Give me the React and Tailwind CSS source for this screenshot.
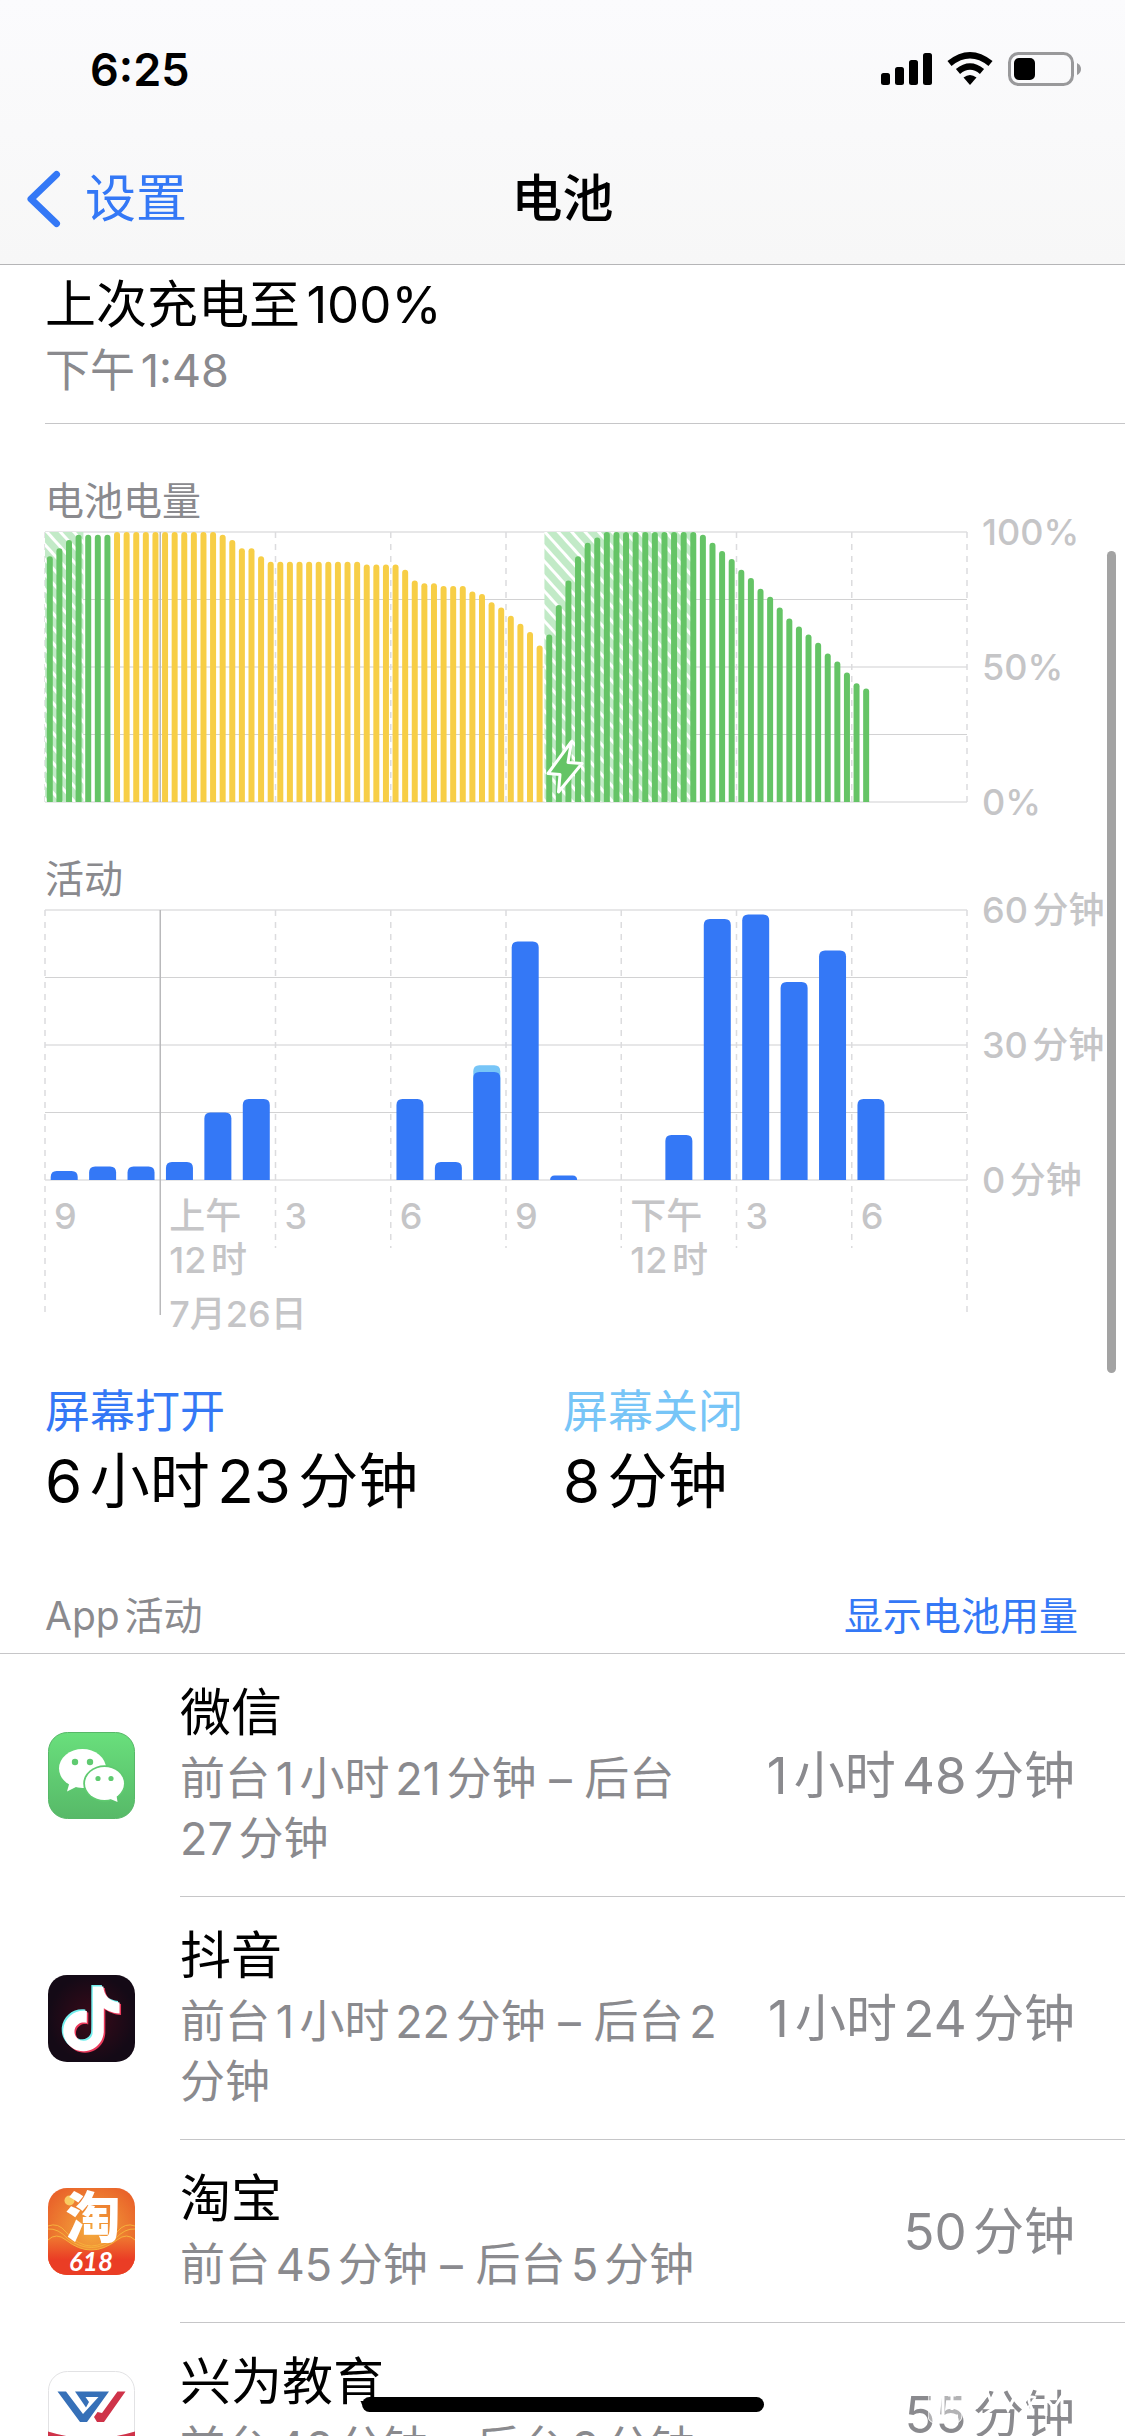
import React from "react";

const BATTERY = [
  91, 94, 97, 99, 99, 99, 99,
  100, 100, 100, 100, 100, 100, 100, 100, 100, 100, 100,
  99, 97, 94, 94, 91,
  89, 89, 89, 89, 89, 89, 89, 89, 89, 89,
  88, 88, 88, 88, 86, 82, 81, 81, 80, 80, 80, 78, 77, 74, 72, 69, 66, 63, 58,
  62, 73, 82, 91, 96, 98,
  100, 100, 100, 100, 100, 100, 100, 100, 100, 100,
  99, 96, 93, 90, 86, 83, 79, 76, 72, 68, 65, 62, 59, 55, 52, 48, 44, 42,
];

const ACTIVITY = [
  2, 3, 3, 4, 15, 18, 0, 0, 0, 18, 4, 24, 53, 1, 0, 0, 10, 58, 59, 44, 51, 18, 0, 0,
];
const SCREEN_OFF = { 11: 1.5 };

const HOURS = [
  { lines: ["9"] },
  { lines: ["上午", "12时"], date: "7月26日" },
  { lines: ["3"] },
  { lines: ["6"] },
  { lines: ["9"] },
  { lines: ["下午", "12时"] },
  { lines: ["3"] },
  { lines: ["6"] },
];

const W = 922;
const H = 270;
const SEG = W / 8;

function HorizontalGrid() {
  return [0, 1, 2, 3, 4].map((i) => (
    <line
      key={i}
      x1="0"
      x2={W}
      y1={i * 67.5}
      y2={i * 67.5}
      stroke={i % 2 ? "#d2d2d3" : "#e7e7e8"}
      strokeWidth={i % 2 ? 1 : 2}
    />
  ));
}

function topRounded(x, y, w, h, r) {
  const k = Math.min(r, h);
  return `M${x} ${y + h}V${y + k}Q${x} ${y} ${x + k} ${y}H${x + w - k}Q${x + w} ${y} ${x + w} ${y + k}V${y + h}Z`;
}

function BatteryChart() {
  const slot = W / 96;
  return (
    <svg viewBox={`0 0 ${W} ${H}`} className="block h-auto w-full overflow-visible" role="img" aria-label="电池电量">
      <defs>
        <pattern id="charging" width="10" height="10" patternUnits="userSpaceOnUse" patternTransform="rotate(-42)">
          <rect width="10" height="10" fill="#c2eac7" />
          <rect width="3" height="10" fill="#fff" />
        </pattern>
      </defs>
      <HorizontalGrid />
      {Array.from({ length: 9 }, (_, i) => (
        <line
          key={i}
          x1={i * SEG}
          x2={i * SEG}
          y1="0"
          y2={H}
          stroke={i === 1 ? "#b9b9bb" : "#dcdcde"}
          strokeWidth="1.5"
          strokeDasharray={i === 1 ? undefined : "6 6"}
        />
      ))}
      <rect x="0" y="0" width={slot * 4} height={H} fill="url(#charging)" />
      <rect x={slot * 52} y="0" width={slot * 15.3} height={H} fill="url(#charging)" />
      {BATTERY.map((v, i) => (
        <path
          key={i}
          d={topRounded(i * slot + 1.8, H - v * 2.7, 6, v * 2.7, 3)}
          fill={i >= 7 && i < 52 ? "#f7ce46" : "#65c466"}
        />
      ))}
      <path
        d="M526.500 209.500L503 241.500L515 242.500L513.500 260L537 231.500L523 230.500Z"
        fill="#65c466"
        stroke="#fff"
        strokeWidth="3"
        strokeLinejoin="round"
      />
    </svg>
  );
}

function ActivityPlot() {
  const slot = W / 24;
  return (
    <svg viewBox={`0 0 ${W} 405`} className="absolute top-0 left-0 block h-auto w-full overflow-visible" role="img" aria-label="活动">
      <HorizontalGrid />
      {Array.from({ length: 9 }, (_, i) => (
        <line
          key={i}
          x1={i * SEG}
          x2={i * SEG}
          y1="0"
          y2={i === 1 ? 405 : i === 0 || i === 8 ? 402 : 338}
          stroke={i === 1 ? "#b9b9bb" : "#dcdcde"}
          strokeWidth="1.5"
          strokeDasharray={i === 1 ? undefined : "6 6"}
        />
      ))}
      {ACTIVITY.map((v, i) => {
        if (!v) return null;
        const x = i * slot + 5.7;
        const off = SCREEN_OFF[i] || 0;
        return (
          <g key={i}>
            {off > 0 && (
              <path d={topRounded(x, H - (v + off) * 4.5, 27, (v + off) * 4.5, 6)} fill="#77c5f7" />
            )}
            <path d={topRounded(x, H - v * 4.5, 27, v * 4.5, 6)} fill="#3478f6" />
          </g>
        );
      })}
    </svg>
  );
}

function AxisLabels({ labels }) {
  return (
    <div className="-mt-[22px] flex h-[314px] w-[158px] flex-col justify-between pl-[15px] text-[36px] leading-[44px] font-medium whitespace-nowrap text-[#c5c5c7]">
      {labels.map((l) => (
        <span key={l}>{l}</span>
      ))}
    </div>
  );
}

function WeChatIcon() {
  return (
    <svg viewBox="0 0 87 87" className="block size-[87px]" aria-hidden="true">
      <defs>
        <linearGradient id="wechat" x1="0" y1="0" x2="0" y2="1">
          <stop offset="0" stopColor="#69df7c" />
          <stop offset="1" stopColor="#57b968" />
        </linearGradient>
      </defs>
      <rect x=".5" y=".5" width="86" height="86" rx="19" fill="url(#wechat)" stroke="#57b868" />
      <path d="M22 49L19 59.500L30 54Z" fill="#fff" />
      <ellipse cx="34.500" cy="36.500" rx="23.500" ry="19.500" fill="#fff" />
      <circle cx="27" cy="30" r="3.200" fill="#5fca70" />
      <circle cx="42" cy="30" r="3.200" fill="#5fca70" />
      <ellipse cx="56.500" cy="51.500" rx="21.300" ry="18.200" fill="#5fca70" />
      <path d="M68 60L69.500 70L60 66Z" fill="#fff" />
      <ellipse cx="56.500" cy="51.500" rx="19.500" ry="16.500" fill="#fff" />
      <circle cx="50" cy="46.500" r="2.600" fill="#5fca70" />
      <circle cx="63" cy="46.500" r="2.600" fill="#5fca70" />
    </svg>
  );
}

const NOTE =
  "M12.525.02c1.31-.02 2.61-.01 3.91-.02.08 1.53.63 3.09 1.75 4.17 1.12 1.11 2.7 1.62 4.24 1.79v4.03c-1.44-.05-2.89-.35-4.2-.97-.57-.26-1.1-.59-1.62-.93-.01 2.92.01 5.84-.02 8.75-.08 1.4-.54 2.79-1.35 3.94-1.31 1.92-3.58 3.17-5.91 3.21-1.43.08-2.86-.31-4.08-1.03-2.02-1.19-3.44-3.37-3.65-5.71-.02-.5-.03-1-.01-1.49.18-1.9 1.12-3.72 2.58-4.96 1.66-1.44 3.98-2.13 6.15-1.72.02 1.48-.04 2.96-.04 4.44-.99-.32-2.15-.23-3.02.37-.63.41-1.11 1.04-1.36 1.75-.21.51-.15 1.07-.14 1.61.24 1.64 1.82 3.02 3.5 2.87 1.12-.01 2.19-.66 2.77-1.61.19-.33.4-.67.41-1.06.1-1.79.06-3.57.07-5.36.01-4.03-.01-8.05.02-12.07z";

function DouyinIcon() {
  return (
    <svg viewBox="0 0 87 87" className="block size-[87px]" aria-hidden="true">
      <defs>
        <radialGradient id="douyin">
          <stop offset="0" stopColor="#3a0a19" />
          <stop offset="1" stopColor="#140a16" />
        </radialGradient>
      </defs>
      <rect width="87" height="87" rx="19" fill="url(#douyin)" />
      <path d={NOTE} transform="translate(9.500 10) scale(2.700)" fill="#72efee" />
      <path d={NOTE} transform="translate(12.500 13) scale(2.700)" fill="#ea3a5b" />
      <path d={NOTE} transform="translate(11 11.500) scale(2.700)" fill="#fff" />
    </svg>
  );
}

function TaobaoIcon() {
  return (
    <svg viewBox="0 0 87 87" className="block size-[87px]" aria-hidden="true">
      <defs>
        <radialGradient id="taobao" cx=".5" cy=".5" r=".6">
          <stop offset="0" stopColor="#f4a93c" />
          <stop offset="1" stopColor="#e9632a" />
        </radialGradient>
        <linearGradient id="wave" x1="0" y1="0" x2="0" y2="1">
          <stop offset="0" stopColor="#ef7a31" />
          <stop offset=".6" stopColor="#ea3d25" />
        </linearGradient>
        <clipPath id="tile">
          <rect width="87" height="87" rx="19" />
        </clipPath>
      </defs>
      <g clipPath="url(#tile)">
        <rect width="87" height="87" fill="url(#taobao)" />
        <path d="M0 52Q8 44 18 52Q43 72 69 52Q79 44 87 52V87H0Z" fill="url(#wave)" />
        <path
          d="M0 38Q10 34 18 44Q43 72 69 44Q77 34 87 38M0 52Q8 44 18 52Q43 72 69 52Q79 44 87 52M0 41Q10 40 20 51Q43 68 67 51Q77 40 87 41"
          fill="none"
          stroke="#f6b13d"
          strokeWidth="1"
        />
        <circle cx="21.500" cy="12.500" r="5" fill="#f9cb62" />
        <text x="45" y="49" textAnchor="middle" fontSize="55" fontWeight="900" fill="#fff" fontFamily="'Noto Sans CJK SC', sans-serif">
          淘
        </text>
        <text x="43" y="83" textAnchor="middle" fontSize="26" fontWeight="700" fontStyle="italic" fill="#fff" fontFamily="Lato, sans-serif">
          618
        </text>
      </g>
    </svg>
  );
}

function XingweiIcon() {
  return (
    <svg viewBox="0 0 87 87" className="block size-[87px]" aria-hidden="true">
      <defs>
        <clipPath id="xw">
          <rect width="87" height="87" rx="19" />
        </clipPath>
      </defs>
      <rect x=".5" y=".5" width="86" height="86" rx="19" fill="#fff" stroke="#e2e2e4" />
      <path d="M9.500 20.500H18L35 43L50.500 26H37.500L41 31L38 36.500L27 20.500H61L39 51H32Z" fill="#3670b8" />
      <path d="M77.500 20.500H69.500L54 42L49.500 41L46 46L49 51H56Z" fill="#cf3349" />
      <path d="M0 60.500Q43 74 87 60.500V87H0Z" fill="#cf3349" clipPath="url(#xw)" />
    </svg>
  );
}

const APPS = [
  { name: "微信", detail: "前台1小时21分钟 – 后台27分钟", total: "1小时48分钟", Icon: WeChatIcon },
  { name: "抖音", detail: "前台1小时22分钟 – 后台2分钟", total: "1小时24分钟", Icon: DouyinIcon },
  { name: "淘宝", detail: "前台45分钟 – 后台5分钟", total: "50分钟", Icon: TaobaoIcon },
  { name: "兴为教育", detail: "前台46分钟 – 后台9分钟", total: "55分钟", Icon: XingweiIcon },
];

function AppRow({ name, detail, total, Icon }) {
  return (
    <li className="flex items-stretch gap-[45px] pl-12">
      <div className="flex items-center">
        <Icon />
      </div>
      <div className="flex min-w-0 flex-1 items-center gap-11 border-b border-[#c6c6c8] pt-[29px] pr-[50px] pb-[27px]">
        <div className="min-w-0 flex-1">
          <h3 className="text-[51px] leading-[60px]">{name}</h3>
          <p className="mt-1.5 text-[45px] leading-[60px] text-[#8a8a8e]">{detail}</p>
        </div>
        <span className="text-[51px] leading-[60px] whitespace-nowrap text-[#8a8a8e]">{total}</span>
      </div>
    </li>
  );
}

function StatusBar() {
  return (
    <div className="flex h-[138px] items-center justify-between pr-[42px] pl-[90px]">
      <time className="text-[45px] leading-none font-semibold">6:25</time>
      <svg viewBox="0 0 202 36" className="block h-9 w-[202px]" aria-hidden="true">
        <rect x="0" y="22" width="9" height="12" rx="2.500" />
        <rect x="14" y="16" width="9" height="18" rx="2.500" />
        <rect x="28" y="9" width="9" height="25" rx="2.500" />
        <rect x="42" y="2" width="9" height="32" rx="2.500" />
        <g fill="none" stroke="#000" strokeWidth="6.500">
          <path d="M68.500 12.500Q89 -4 109.500 12.500" />
          <path d="M77 20.500Q89 10.500 101 20.500" />
        </g>
        <path d="M82.500 26.500Q89 21.500 95.500 26.500L89 34Z" />
        <rect x="128.500" y="2.500" width="63" height="31" rx="9" fill="none" stroke="#99999b" strokeWidth="3" />
        <rect x="133" y="7" width="21" height="22" rx="5" />
        <path d="M196 12Q200 14 200 18T196 24Z" fill="#99999b" />
      </svg>
    </div>
  );
}

export default function App() {
  return (
    <div className="relative flex h-screen flex-col overflow-hidden bg-white font-['Inter','Noto_Sans_CJK_SC',sans-serif] text-black [text-autospace:normal]" lang="zh-CN">
      <header className="shrink-0 border-b border-[#b5b5b7] bg-linear-to-b from-[#fbfbfd] to-[#f7f7f7] pb-1">
        <StatusBar />
        <nav className="grid h-[122px] grid-cols-3 items-center">
          <button type="button" className="flex items-center gap-6 justify-self-start pl-[26px] text-[51px] leading-[60px] text-[#3478f6]">
            <svg viewBox="0 0 35 58" className="block h-[58px] w-[35px]" fill="none" stroke="currentColor" strokeWidth="7" strokeLinecap="round" strokeLinejoin="round" aria-hidden="true">
              <path d="M30.500 4.500L5 29L30.500 53.500" />
            </svg>
            设置
          </button>
          <h1 className="text-center text-[51px] leading-[60px] font-medium">电池</h1>
        </nav>
      </header>

      <main className="min-h-0 flex-1 overflow-hidden">
        <section className="ml-[45px] border-b border-[#c6c6c8] pt-2.5 pb-[22px]">
          <h2 className="text-[51px] leading-[60px]">上次充电至100%</h2>
          <p className="mt-1.5 text-[45px] leading-[60px] text-[#8a8a8e]">下午1:48</p>
        </section>

        <section className="mt-[51px] pl-[45px]">
          <h2 className="mb-[5px] text-[39px] leading-[52px] text-[#8a8a8e]">电池电量</h2>
          <div className="flex">
            <div className="flex-1">
              <BatteryChart />
            </div>
            <AxisLabels labels={["100%", "50%", "0%"]} />
          </div>
        </section>

        <section className="mt-[29px] pl-[45px]">
          <h2 className="mb-[5px] text-[39px] leading-[52px] text-[#8a8a8e]">活动</h2>
          <div className="flex items-start">
            <div className="relative flex-1">
              <ActivityPlot />
              <div className="grid grid-cols-8 pt-[284px] text-[36px] leading-[44px] font-medium whitespace-nowrap text-[#c5c5c7]">
                {HOURS.map((h, i) => (
                  <div key={i} className="pl-[9px]">
                    {h.lines.map((l) => (
                      <div key={l}>{l}</div>
                    ))}
                    {h.date && <div className="mt-2.5 w-0 [text-autospace:no-autospace]">{h.date}</div>}
                  </div>
                ))}
              </div>
            </div>
            <AxisLabels labels={["60分钟", "30分钟", "0分钟"]} />
          </div>
        </section>

        <section className="mt-[46px] grid grid-cols-2 pl-[45px]">
          <div>
            <h2 className="text-[45px] leading-[60px] text-[#3478f6]">屏幕打开</h2>
            <p className="mt-[3px] text-[60px] leading-[72px]">6小时23分钟</p>
          </div>
          <div className="-ml-[22px]">
            <h2 className="text-[45px] leading-[60px] text-[#77c5f7]">屏幕关闭</h2>
            <p className="mt-[3px] text-[60px] leading-[72px]">8分钟</p>
          </div>
        </section>

        <section className="mt-[73px]">
          <div className="flex justify-between border-b border-[#c6c6c8] pr-[47px] pb-[11px] pl-[45px] text-[39px] leading-[52px]">
            <h2 className="text-[#8a8a8e]">App活动</h2>
            <button type="button" className="text-[#3478f6]">显示电池用量</button>
          </div>
          <ul>
            {APPS.map((app) => (
              <AppRow key={app.name} {...app} />
            ))}
          </ul>
        </section>
      </main>

      <div className="absolute top-[551px] right-[9px] h-[822px] w-[9px] rounded-full bg-[#a3a3a3]" />
      <svg viewBox="0 0 170 44" className="absolute right-[27px] bottom-1.5 block h-11 w-[170px]" fill="none" stroke="#fff" strokeWidth="3" aria-hidden="true">
        <rect x="0" y="3" width="34" height="34" rx="7" fill="#fff" fillOpacity=".35" strokeWidth="1" />
        <path d="M8 9H15V30M20 9H28M20 17H28M24 9V24M18 30H30M48 22L60 8L64 18M54 30L66 22M72 6L80 24L88 8M108 12Q98 8 102 18T104 28M118 30V12L126 22L134 10V30" />
      </svg>
      <div className="absolute bottom-6 left-1/2 h-[15px] w-[402px] -translate-x-1/2 rounded-full bg-black" />
    </div>
  );
}
